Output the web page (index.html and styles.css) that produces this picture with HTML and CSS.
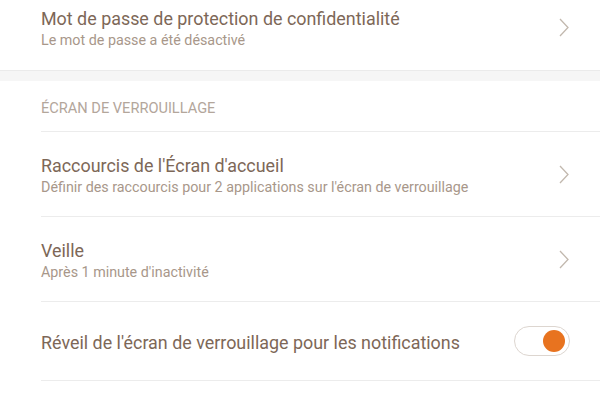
FILE: index.html
```html
<!DOCTYPE html>
<html lang="fr">
<head>
  <meta charset="UTF-8">
  <title>Écran de verrouillage</title>
  <link rel="stylesheet" href="styles.css">
</head>
<body>
  <div class="row first">
    <div class="text">
      <div class="title">Mot de passe de protection de confidentialité</div>
      <div class="sub">Le mot de passe a été désactivé</div>
    </div>
    <svg class="chevron" width="10" height="19" viewBox="0 0 10 19"><path d="M1 1 L9 9.5 L1 18" fill="none" stroke="#c2b8ae" stroke-width="1.3"/></svg>
  </div>

  <div class="band"></div>

  <div class="header">ÉCRAN DE VERROUILLAGE</div>

  <div class="row">
    <div class="text">
      <div class="title">Raccourcis de l'Écran d'accueil</div>
      <div class="sub">Définir des raccourcis pour 2 applications sur l'écran de verrouillage</div>
    </div>
    <svg class="chevron" width="10" height="19" viewBox="0 0 10 19"><path d="M1 1 L9 9.5 L1 18" fill="none" stroke="#c2b8ae" stroke-width="1.3"/></svg>
  </div>

  <div class="row">
    <div class="text">
      <div class="title">Veille</div>
      <div class="sub">Après 1 minute d'inactivité</div>
    </div>
    <svg class="chevron" width="10" height="19" viewBox="0 0 10 19"><path d="M1 1 L9 9.5 L1 18" fill="none" stroke="#c2b8ae" stroke-width="1.3"/></svg>
  </div>

  <div class="row single">
    <div class="text">
      <div class="title">Réveil de l'écran de verrouillage pour les notifications</div>
    </div>
    <div class="toggle on"><span class="knob"></span></div>
  </div>
</body>
</html>
```

FILE: styles.css
```css
body { margin: 0; background: #fff; font-family: Roboto, "Noto Sans", sans-serif; overflow: hidden; }

.row { display: flex; align-items: center; justify-content: space-between; height: 85px; margin-left: 41px; padding-right: 31px; border-top: 1px solid #ececec; box-sizing: border-box; }
.row.first { margin-top: -15px; border-top: none; height: 85px; }
.row.single { height: 80px; border-bottom: 1px solid #ececec; }

.text { display: flex; flex-direction: column; gap: 1px; margin-top: 3px; }
.title { font-size: 17.9px; line-height: 22px; color: #7d6757; }
.sub { font-size: 14.3px; line-height: 19px; color: #a8978a; }

.chevron { flex: none; }

.band { height: 11px; background: #f6f6f6; border-top: 1px solid #ebebeb; box-sizing: border-box; }

.header { height: 50px; display: flex; align-items: center; padding-left: 41px; padding-top: 3px; box-sizing: border-box; font-size: 14.6px; color: #b3a69b; }

.toggle { position: relative; width: 56px; height: 30px; border: 1px solid #ddd6d0; border-radius: 16px; box-sizing: border-box; margin-right: -1px; flex: none; }
.toggle .knob { position: absolute; right: 4px; top: 3px; width: 22px; height: 22px; border-radius: 50%; background: #e8731f; }
```
